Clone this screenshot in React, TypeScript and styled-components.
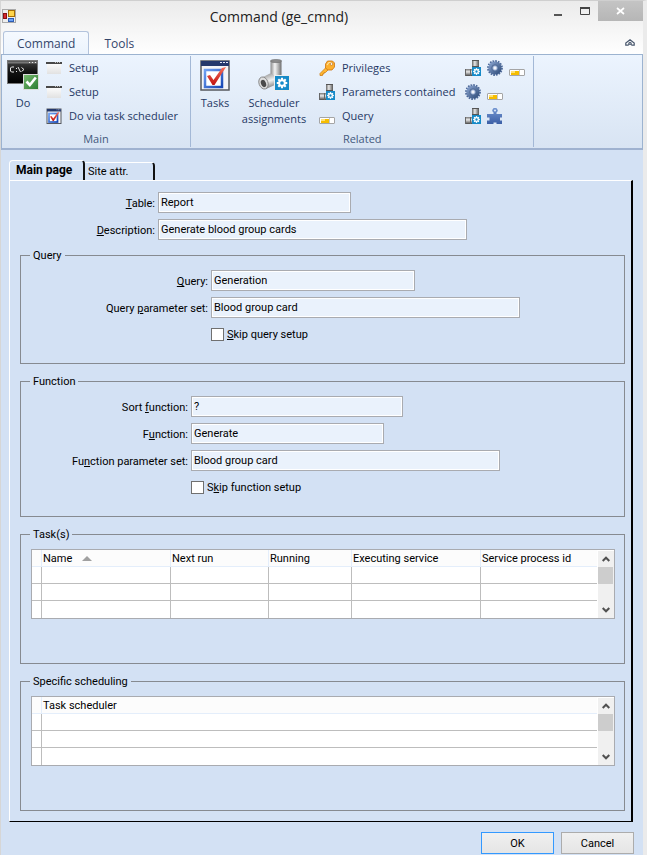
import React from 'react';
import styled, { createGlobalStyle } from 'styled-components';

const uiFont = '"Open Sans", "Noto Sans", sans-serif';
const formFont = 'Roboto, "Liberation Sans", sans-serif';
const surface = '#d3e1f4';

const GlobalStyle = createGlobalStyle`
  *, *::before, *::after { box-sizing: border-box; }
  body { margin: 0; background: ${surface}; }
  button, input { font: inherit; color: inherit; }
  button { margin: 0; padding: 0; border: 0; background: none; }
  svg { display: block; flex: none; }
`;

const Window = styled.div`
  display: flex;
  flex-direction: column;
  min-height: 100vh;
  border-top: 1px solid #cfcfcf;
  border-left: 1px solid #d6d6d6;
  border-right: 4px solid #ebebeb;
  background: ${surface};
  color: #000;
  font: 11px/13px ${formFont};
`;

/* Title bar and ribbon */

const Chrome = styled.header`
  background: linear-gradient(#ebebeb, #ffffff 54px);
  font-family: ${uiFont};
`;

const TitleBar = styled.div`
  display: flex;
  align-items: flex-start;
  height: 30px;
`;

const AppIcon = styled.span`
  padding: 8px 0 0 1px;
`;

const Title = styled.h1`
  flex: 1;
  margin: 0;
  padding-top: 6px;
  color: #222;
  font-size: 14px;
  font-weight: 400;
  line-height: 20px;
  text-align: center;
`;

const CaptionButton = styled.button<{ $close?: boolean }>`
  display: grid;
  place-items: center;
  width: ${(p) => (p.$close ? 45 : 28)}px;
  height: 20px;
  background: ${(p) => (p.$close ? 'linear-gradient(#c4c4c4, #b6b6b6)' : 'none')};
`;

const RibbonTabs = styled.div`
  display: flex;
  align-items: flex-end;
  height: 23px;
  padding: 0 8px 0 2px;
`;

const RibbonTab = styled.button<{ $active?: boolean }>`
  height: 23px;
  padding: 0 ${(p) => (p.$active ? 13 : 14)}px;
  border: 1px solid ${(p) => (p.$active ? '#b3c3dc' : 'transparent')};
  border-bottom: 0;
  border-radius: 3px 3px 0 0;
  background: ${(p) => (p.$active ? 'linear-gradient(#f5f9fe, #ebf3fd)' : 'none')};
  color: #34466b;
  font-size: 12px;
  line-height: 24px;
`;

const CollapseButton = styled.button`
  margin-left: auto;
  padding-bottom: 7px;
`;

const Ribbon = styled.div`
  display: flex;
  padding: 1px 0;
  border: 1px solid #9cb3d0;
  border-bottom: 2px solid #9fb2d0;
  background: linear-gradient(#ecf4fe, #d8e4f3);
  color: #1f3864;
  font-size: 11px;
  line-height: 16px;
`;

const RibbonGroup = styled.section`
  display: flex;
  flex: none;
  flex-direction: column;
  border-right: 1px solid #a3b8d6;
`;

const GroupBody = styled.div`
  display: flex;
  height: 74px;
  padding: 0 2px 0 4px;
`;

const GroupTitle = styled.h2`
  margin: 0;
  color: #44597d;
  font-size: 11px;
  font-weight: 400;
  line-height: 17px;
  text-align: center;
`;

const LargeButton = styled.button<{ $width: number }>`
  display: flex;
  flex: none;
  flex-direction: column;
  align-items: center;
  gap: 4px;
  width: ${(p) => p.$width}px;
  padding-top: 3px;
`;

const CommandList = styled.div`
  display: flex;
  flex: none;
  flex-direction: column;
  padding: 0 10px 0 6px;
`;

const CommandButton = styled.button`
  display: flex;
  align-items: center;
  gap: 7px;
  height: 24px;
  white-space: nowrap;
`;

const IconGrid = styled.div`
  display: grid;
  grid-template-columns: repeat(3, 22px);
  grid-auto-rows: 24px;
`;

const IconButton = styled.button`
  display: flex;
  align-items: center;
`;

/* Form pages */

const Main = styled.main`
  display: flex;
  flex-direction: column;
  padding: 10px 10px 0 8px;
`;

const PageTabs = styled.div`
  display: flex;
  align-items: flex-end;
`;

const PageTab = styled.button<{ $active?: boolean }>`
  width: ${(p) => (p.$active ? 76 : 70)}px;
  height: ${(p) => (p.$active ? 20 : 18)}px;
  padding-left: ${(p) => (p.$active ? 6 : 3)}px;
  border-top: 1px solid #fff;
  border-left: ${(p) => (p.$active ? '1px solid #fff' : '0')};
  border-right: 2px solid #111;
  border-radius: ${(p) => (p.$active ? '4px 4px 0 0' : '0 4px 0 0')};
  font-size: ${(p) => (p.$active ? 12 : 11)}px;
  font-weight: ${(p) => (p.$active ? 700 : 400)};
  text-align: left;
`;

const Page = styled.div`
  display: flex;
  flex-direction: column;
  padding: 11px 6px 10px 10px;
  border: 1px solid #fff;
  border-right: 2px solid #000;
  border-bottom: 1px solid #000;
`;

const Group = styled.fieldset<{ $top: number; $bottom: number }>`
  min-width: 0;
  margin: ${(p) => p.$top}px 0 0;
  padding: 8px 9px ${(p) => p.$bottom}px 10px;
  border: 1px solid #868a90;
`;

const Legend = styled.legend`
  margin-left: -1px;
  padding: 0 3px;
  line-height: 13px;
`;

const Fields = styled.div<{ $label: number }>`
  display: grid;
  grid-template-columns: ${(p) => p.$label}px minmax(0, 1fr);
  column-gap: 3px;
  row-gap: 6px;
`;

const FieldLabel = styled.label`
  height: 21px;
  line-height: 23px;
  text-align: right;
  white-space: nowrap;
`;

const TextBox = styled.input<{ $width: number }>`
  display: block;
  width: ${(p) => p.$width}px;
  max-width: 100%;
  height: 21px;
  padding: 0 2px 1px;
  border: 1px solid #a9abb0;
  border-radius: 0;
  outline: none;
  background: #eaf2fc;
  box-shadow: inset 0 0 0 1px #fff;
`;

const CheckField = styled.label`
  display: flex;
  grid-column: 2;
  align-items: center;
  gap: 3px;
  height: 21px;
`;

const CheckBox = styled.input`
  width: 13px;
  height: 13px;
  margin: 0;
  appearance: none;
  border: 1px solid #707070;
  background: #fff;
`;

/* Data grids */

const GridFrame = styled.div`
  display: flex;
  border: 1px solid #a9abb0;
  background: #fff;
`;

const DataTable = styled.table`
  flex: 1;
  min-width: 0;
  table-layout: fixed;
  border-collapse: separate;
  border-spacing: 0;
`;

const HeaderCell = styled.th<{ $width?: number }>`
  width: ${(p) => (p.$width ? `${p.$width}px` : 'auto')};
  height: 17px;
  padding: 1px 0 0 1px;
  border-right: 1px solid #e4eefb;
  border-bottom: 1px solid #e4eefb;
  background: #fcfcfc;
  font-weight: 400;
  text-align: left;
  white-space: nowrap;
  &:last-child { border-right: 0; }
`;

const HeaderContent = styled.span`
  display: flex;
  align-items: center;
  gap: 10px;
`;

const Cell = styled.td`
  height: 17px;
  padding: 0;
  border-right: 1px solid #bdbdbd;
  border-bottom: 1px solid #bdbdbd;
  &:last-child { border-right: 0; }
  tr:last-child > & { border-bottom: 0; }
`;

const ScrollTrack = styled.div`
  display: flex;
  flex-direction: column;
  width: 17px;
  border: 1px solid #fff;
  border-width: 1px 0 0 1px;
  background: #f0f0f0;
`;

const ScrollArrow = styled.button`
  display: grid;
  place-items: center;
  height: 16px;
`;

const ScrollThumb = styled.div`
  width: 15px;
  height: 17px;
  margin-bottom: auto;
  background: #cdcdcd;
`;

const Footer = styled.footer`
  display: flex;
  justify-content: flex-end;
  gap: 7px;
  padding: 10px 9px 2px;
`;

const DialogButton = styled.button<{ $primary?: boolean }>`
  width: 73px;
  height: 22px;
  border: 1px solid ${(p) => (p.$primary ? '#3399ff' : '#acacac')};
  background: linear-gradient(#f0f0f0, #e5e5e5);
`;

/* Icons */

const AppGlyph = () => (
  <svg width="14" height="14" viewBox="0 0 14 14">
    <rect x=".5" y=".5" width="13" height="13" fill="#eee" stroke="#a9a9a9" />
    <rect x="1.5" y="4.5" width="3" height="5" fill="#d6282b" stroke="#861012" />
    <rect x="6.5" y="1.5" width="6" height="6" fill="#ffd54b" stroke="#a66e05" />
    <rect x="6.5" y="9.5" width="5" height="3" fill="#6da3f5" stroke="#2d5cb4" />
  </svg>
);

const MinimizeGlyph = () => (
  <svg width="12" height="12" viewBox="0 0 12 12"><path d="M4 10h8" stroke="#555" strokeWidth="2" /></svg>
);

const MaximizeGlyph = () => (
  <svg width="12" height="12" viewBox="0 0 12 12">
    <path d="M2.500 2v7.500h9V2" fill="none" stroke="#444" /><path d="M2 3h10" stroke="#444" strokeWidth="2" />
  </svg>
);

const CloseGlyph = () => (
  <svg width="9" height="8" viewBox="0 0 9 8"><path d="M1 1l7 6m0-6l-7 6" stroke="#fff" strokeWidth="1.700" /></svg>
);

const CollapseGlyph = () => (
  <svg width="10" height="8" viewBox="0 0 10 8">
    <path d="M5 .8L9.200 4v2.200H7L5 4.800 3 6.200H.8V4z" fill="#fff" stroke="#47566c" strokeWidth="1.200" />
    <path d="M3 4.600L5 3l2 1.600" fill="none" stroke="#47566c" />
  </svg>
);

const ConsoleGlyph = () => (
  <svg width="32" height="32" viewBox="0 0 32 32">
    <defs>
      <linearGradient id="console" x2="0" y2="1"><stop stopColor="#444" /><stop offset=".5" stopColor="#111" /><stop offset="1" stopColor="#000" /></linearGradient>
      <linearGradient id="check" x2="1" y2="1"><stop stopColor="#79bb70" /><stop offset="1" stopColor="#2a7a30" /></linearGradient>
    </defs>
    <rect x=".5" y="1.500" width="30" height="23" fill="url(#console)" stroke="#777" />
    <path d="M1 3.500h29" stroke="#777" strokeWidth="2" />
    <path d="M22 3.500h1m2 0h1m2 0h1" stroke="#eee" />
    <path d="M7 8H4.500L3.500 9v3l1 1H7M9 9.500h1M9 12.500h1M11 8l2.500 5M14.500 8.500l2.500 2-2.500 2" fill="none" stroke="#e8e8e8" />
    <rect x="16.500" y="15.500" width="15" height="15" fill="url(#check)" stroke="#dcdcdc" />
    <path d="M19.500 22.500l3.300 3.500 6-7.500" fill="none" stroke="#fff" strokeWidth="2.600" />
  </svg>
);

const WindowGlyph = () => (
  <svg width="16" height="14" viewBox="0 0 16 14">
    <defs><linearGradient id="blank" x2="0" y2="1"><stop stopColor="#fdfdfd" /><stop offset="1" stopColor="#e2e2e2" /></linearGradient></defs>
    <rect x="1" y="2" width="14" height="11" fill="url(#blank)" />
    <path d="M0 2h16" stroke="#484848" strokeWidth="2" /><path d="M9 1.500h1m1 0h1m1 0h1" stroke="#bbb" />
  </svg>
);

const TaskGlyph = ({ size }: { size: number }) => (
  <svg width={size} height={size} viewBox="0 0 32 32">
    <defs>
      <linearGradient id={`task${size}`} x2="1" y2="1"><stop stopColor="#6fa0f2" /><stop offset="1" stopColor="#1747b5" /></linearGradient>
      <linearGradient id={`tick${size}`} x2="0" y2="1"><stop stopColor="#f6705c" /><stop offset="1" stopColor="#c01210" /></linearGradient>
    </defs>
    <rect x="2" y="2" width="28" height="29" fill="#f3f4f7" stroke="#55585e" strokeWidth={size < 20 ? 2 : 1.500} />
    <path d="M2 4.500h28" stroke="#24386c" strokeWidth="5" />
    <path d="M21 3.500h2m1 0h2m1 0h2" stroke="#dfe6f6" />
    <rect x="6" y="11" width="17" height="17" fill="#fff" stroke={`url(#task${size})`} strokeWidth={size < 20 ? 3.500 : 2.500} />
    <path d="M8 17l3-1 3.500 5 8.500-12 4-1-11.500 18h-2z" fill={`url(#tick${size})`} />
  </svg>
);

const teeth = [0, 45, 90, 135, 180, 225, 270, 315];

const CogBadge = ({ x, y, size }: { x: number; y: number; size: number }) => (
  <svg x={x} y={y} width={size} height={size} viewBox="0 0 16 16">
    <rect width="16" height="16" fill="#168ac8" />
    {teeth.map((a) => (
      <path key={a} d="M8 2v4" stroke="#fff" strokeWidth="2.400" transform={`rotate(${a} 8 8)`} />
    ))}
    <circle cx="8" cy="8" r="3.200" fill="#168ac8" stroke="#fff" strokeWidth="2.200" />
  </svg>
);

const PipeLargeGlyph = () => (
  <svg width="32" height="32" viewBox="0 0 32 32">
    <defs>
      <linearGradient id="pipe"><stop stopColor="#8a8a8a" /><stop offset=".4" stopColor="#f4f4f4" /><stop offset=".7" stopColor="#b5b5b5" /><stop offset="1" stopColor="#6d6d6d" /></linearGradient>
      <linearGradient id="elbow" x1=".3" x2=".7" y2="1"><stop stopColor="#999" /><stop offset=".45" stopColor="#f0f0f0" /><stop offset="1" stopColor="#5d5d5d" /></linearGradient>
    </defs>
    <path d="M13 14L4 18.500l4 11.500 11-5c3-2 4-5 4-9z" fill="url(#elbow)" />
    <path d="M12.500 1.500h11V16c-3 2-8 1-11-2z" fill="url(#pipe)" />
    <ellipse cx="18" cy="2" rx="5.500" ry="1.600" fill="#8c8c8c" stroke="#666" strokeWidth=".6" />
    <ellipse cx="5.500" cy="24" rx="4.500" ry="6.200" fill="#dedede" stroke="#7b7b7b" strokeWidth=".8" transform="rotate(-20 5.500 24)" />
    <ellipse cx="5.500" cy="24.500" rx="2.500" ry="3.800" fill="#4b4b4b" transform="rotate(-20 5.500 24.500)" />
    <rect x="16" y="16" width="16" height="16" fill="#eee" />
    <CogBadge x={17} y={17} size={14} />
  </svg>
);

const PipeGlyph = () => (
  <svg width="16" height="16" viewBox="0 0 16 16">
    <defs>
      <linearGradient id="pipeV"><stop stopColor="#666" /><stop offset=".4" stopColor="#e8e8e8" /><stop offset="1" stopColor="#555" /></linearGradient>
      <linearGradient id="pipeH" x2="0" y2="1"><stop stopColor="#777" /><stop offset=".4" stopColor="#e8e8e8" /><stop offset="1" stopColor="#444" /></linearGradient>
    </defs>
    <rect x="7" y="0" width="7" height="10" fill="url(#pipeV)" /><path d="M7 .5h7M7 6.500h7" stroke="#555" />
    <rect x="0" y="9" width="9" height="7" fill="url(#pipeH)" /><path d="M.5 9v7M5.500 9v7" stroke="#666" />
    <CogBadge x={7} y={7} size={9} />
  </svg>
);

const GearGlyph = () => (
  <svg width="16" height="16" viewBox="0 0 16 16">
    <defs><linearGradient id="gear" x2="1" y2="1"><stop stopColor="#8fa9d5" /><stop offset="1" stopColor="#294674" /></linearGradient></defs>
    <circle cx="8" cy="8" r="7" fill="none" stroke="#4b6798" strokeWidth="1.800" strokeDasharray="1.700 1.050" />
    <circle cx="8" cy="8" r="6.600" fill="url(#gear)" />
    <circle cx="8" cy="8" r="3.200" fill="#90a6ce" stroke="#38557f" strokeWidth=".7" />
    <circle cx="8" cy="8" r="1.700" fill="#f2f5fb" />
  </svg>
);

const QueryGlyph = () => (
  <svg width="16" height="16" viewBox="0 0 16 16">
    <rect x=".5" y="9.500" width="15" height="6" rx=".5" fill="#fff" stroke="#a5a5a5" />
    <path d="M2 11h8v4H2z" fill="#f6bd00" /><path d="M2 11h4v2H2z" fill="#ffe174" /><path d="M10.500 10v5" stroke="#c9c9c9" />
  </svg>
);

const KeyGlyph = () => (
  <svg width="16" height="16" viewBox="0 0 16 16">
    <path d="M7 7.500L1 13.500v2h2.500v-1.500H5v-1.500h1.500L9 10" fill="#ffb731" stroke="#ce7d14" strokeWidth=".8" />
    <path d="M8.500 1h5l2 2v4l-2.500 3H9L6.500 8V4z" fill="#fdb02e" stroke="#cd7410" strokeWidth=".8" />
    <path d="M8 5l2-2.500h3" fill="none" stroke="#ffe19a" strokeWidth="1.200" />
    <circle cx="12.500" cy="4" r="1.300" fill="#fff" stroke="#b5650b" strokeWidth=".6" />
  </svg>
);

const PuzzleGlyph = () => (
  <svg width="16" height="16" viewBox="0 0 16 16">
    <defs><linearGradient id="puzzle" x2="0" y2="1"><stop stopColor="#7396d2" /><stop offset="1" stopColor="#3c5fa6" /></linearGradient></defs>
    <path d="M0 6h6.500V4.500a2.600 2.600 0 113 0V6H15v3.500h-2v3h2V16H9.500v-1.500h-3V16H0v-3.500h2.500v-3H0z" fill="url(#puzzle)" />
    <circle cx="8" cy="2.500" r="1.100" fill="#d7e2f4" />
  </svg>
);

const SortGlyph = () => (
  <svg width="10" height="5" viewBox="0 0 10 5"><path d="M5 0l5 5H0z" fill="#a0a0a0" /></svg>
);

const ChevronGlyph = ({ down }: { down?: boolean }) => (
  <svg width="8" height="6" viewBox="0 0 8 6">
    <path d={down ? 'M.7 1L4 4.300 7.300 1' : 'M.7 5L4 1.700 7.300 5'} fill="none" stroke="#505050" strokeWidth="2" />
  </svg>
);

/* Composed parts */

/* Underlines the character that follows "&" in a caption. */
const Mnemonic = ({ text }: { text: string }) => {
  const at = text.indexOf('&');
  return <span>{text.slice(0, at)}<u>{text[at + 1]}</u>{text.slice(at + 2)}</span>;
};

const Field = ({ id, label, value, width }: { id: string; label: string; value: string; width: number }) => (
  <>
    <FieldLabel htmlFor={id}><Mnemonic text={label} /></FieldLabel>
    <TextBox id={id} $width={width} defaultValue={value} />
  </>
);

const Check = ({ label }: { label: string }) => (
  <CheckField><CheckBox type="checkbox" /><Mnemonic text={label} /></CheckField>
);

type Column = { title: string; width?: number; sorted?: boolean };

const DataGrid = ({ columns }: { columns: Column[] }) => (
  <GridFrame>
    <DataTable>
      <thead>
        <tr>
          <HeaderCell $width={10} />
          {columns.map((c) => (
            <HeaderCell key={c.title} $width={c.width} scope="col">
              <HeaderContent>{c.title}{c.sorted && <SortGlyph />}</HeaderContent>
            </HeaderCell>
          ))}
        </tr>
      </thead>
      <tbody>
        {[0, 1, 2].map((row) => (
          <tr key={row}><Cell />{columns.map((c) => <Cell key={c.title} />)}</tr>
        ))}
      </tbody>
    </DataTable>
    <ScrollTrack>
      <ScrollArrow aria-label="Scroll up"><ChevronGlyph /></ScrollArrow>
      <ScrollThumb />
      <ScrollArrow aria-label="Scroll down"><ChevronGlyph down /></ScrollArrow>
    </ScrollTrack>
  </GridFrame>
);

const taskColumns: Column[] = [
  { title: 'Name', width: 129, sorted: true },
  { title: 'Next run', width: 98 },
  { title: 'Running', width: 83 },
  { title: 'Executing service', width: 129 },
  { title: 'Service process id' },
];

export default function App() {
  return (
    <Window>
      <GlobalStyle />
      <Chrome>
        <TitleBar>
          <AppIcon><AppGlyph /></AppIcon>
          <Title>Command (ge_cmnd)</Title>
          <CaptionButton aria-label="Minimize"><MinimizeGlyph /></CaptionButton>
          <CaptionButton aria-label="Maximize"><MaximizeGlyph /></CaptionButton>
          <CaptionButton $close aria-label="Close"><CloseGlyph /></CaptionButton>
        </TitleBar>
        <RibbonTabs>
          <RibbonTab $active>Command</RibbonTab>
          <RibbonTab>Tools</RibbonTab>
          <CollapseButton aria-label="Collapse ribbon"><CollapseGlyph /></CollapseButton>
        </RibbonTabs>
        <Ribbon>
          <RibbonGroup>
            <GroupBody>
              <LargeButton $width={34}><ConsoleGlyph />Do</LargeButton>
              <CommandList>
                <CommandButton><WindowGlyph />Setup</CommandButton>
                <CommandButton><WindowGlyph />Setup</CommandButton>
                <CommandButton><TaskGlyph size={16} />Do via task scheduler</CommandButton>
              </CommandList>
            </GroupBody>
            <GroupTitle>Main</GroupTitle>
          </RibbonGroup>
          <RibbonGroup>
            <GroupBody>
              <LargeButton $width={40}><TaskGlyph size={32} />Tasks</LargeButton>
              <LargeButton $width={78}><PipeLargeGlyph />Scheduler assignments</LargeButton>
              <CommandList>
                <CommandButton><KeyGlyph />Privileges</CommandButton>
                <CommandButton><PipeGlyph />Parameters contained</CommandButton>
                <CommandButton><QueryGlyph />Query</CommandButton>
              </CommandList>
              <IconGrid>
                <IconButton aria-label="Function parameters"><PipeGlyph /></IconButton>
                <IconButton aria-label="Function"><GearGlyph /></IconButton>
                <IconButton aria-label="Query usage"><QueryGlyph /></IconButton>
                <IconButton aria-label="Sort function"><GearGlyph /></IconButton>
                <IconButton aria-label="Query details"><QueryGlyph /></IconButton>
                <span />
                <IconButton aria-label="Parameter sets"><PipeGlyph /></IconButton>
                <IconButton aria-label="Components"><PuzzleGlyph /></IconButton>
              </IconGrid>
            </GroupBody>
            <GroupTitle>Related</GroupTitle>
          </RibbonGroup>
        </Ribbon>
      </Chrome>

      <Main>
        <PageTabs role="tablist">
          <PageTab role="tab" aria-selected $active>Main page</PageTab>
          <PageTab role="tab" aria-selected={false}>Site attr.</PageTab>
        </PageTabs>
        <Page role="tabpanel">
          <Fields $label={135}>
            <Field id="table" label="&Table:" value="Report" width={193} />
            <Field id="description" label="&Description:" value="Generate blood group cards" width={309} />
          </Fields>
          <Group $top={9} $bottom={18}>
            <Legend>Query</Legend>
            <Fields $label={177}>
              <Field id="query" label="&Query:" value="Generation" width={204} />
              <Field id="query-set" label="Query &parameter set:" value="Blood group card" width={309} />
              <Check label="&Skip query setup" />
            </Fields>
          </Group>
          <Group $top={11} $bottom={18}>
            <Legend>Function</Legend>
            <Fields $label={157}>
              <Field id="sort" label="Sort &function:" value="?" width={212} />
              <Field id="function" label="F&unction:" value="Generate" width={193} />
              <Field id="function-set" label="Fu&nction parameter set:" value="Blood group card" width={309} />
              <Check label="S&kip function setup" />
            </Fields>
          </Group>
          <Group $top={11} $bottom={44}>
            <Legend>Task(s)</Legend>
            <DataGrid columns={taskColumns} />
          </Group>
          <Group $top={11} $bottom={44}>
            <Legend>Specific scheduling</Legend>
            <DataGrid columns={[{ title: 'Task scheduler' }]} />
          </Group>
        </Page>
      </Main>
      <Footer>
        <DialogButton $primary>OK</DialogButton>
        <DialogButton>Cancel</DialogButton>
      </Footer>
    </Window>
  );
}
